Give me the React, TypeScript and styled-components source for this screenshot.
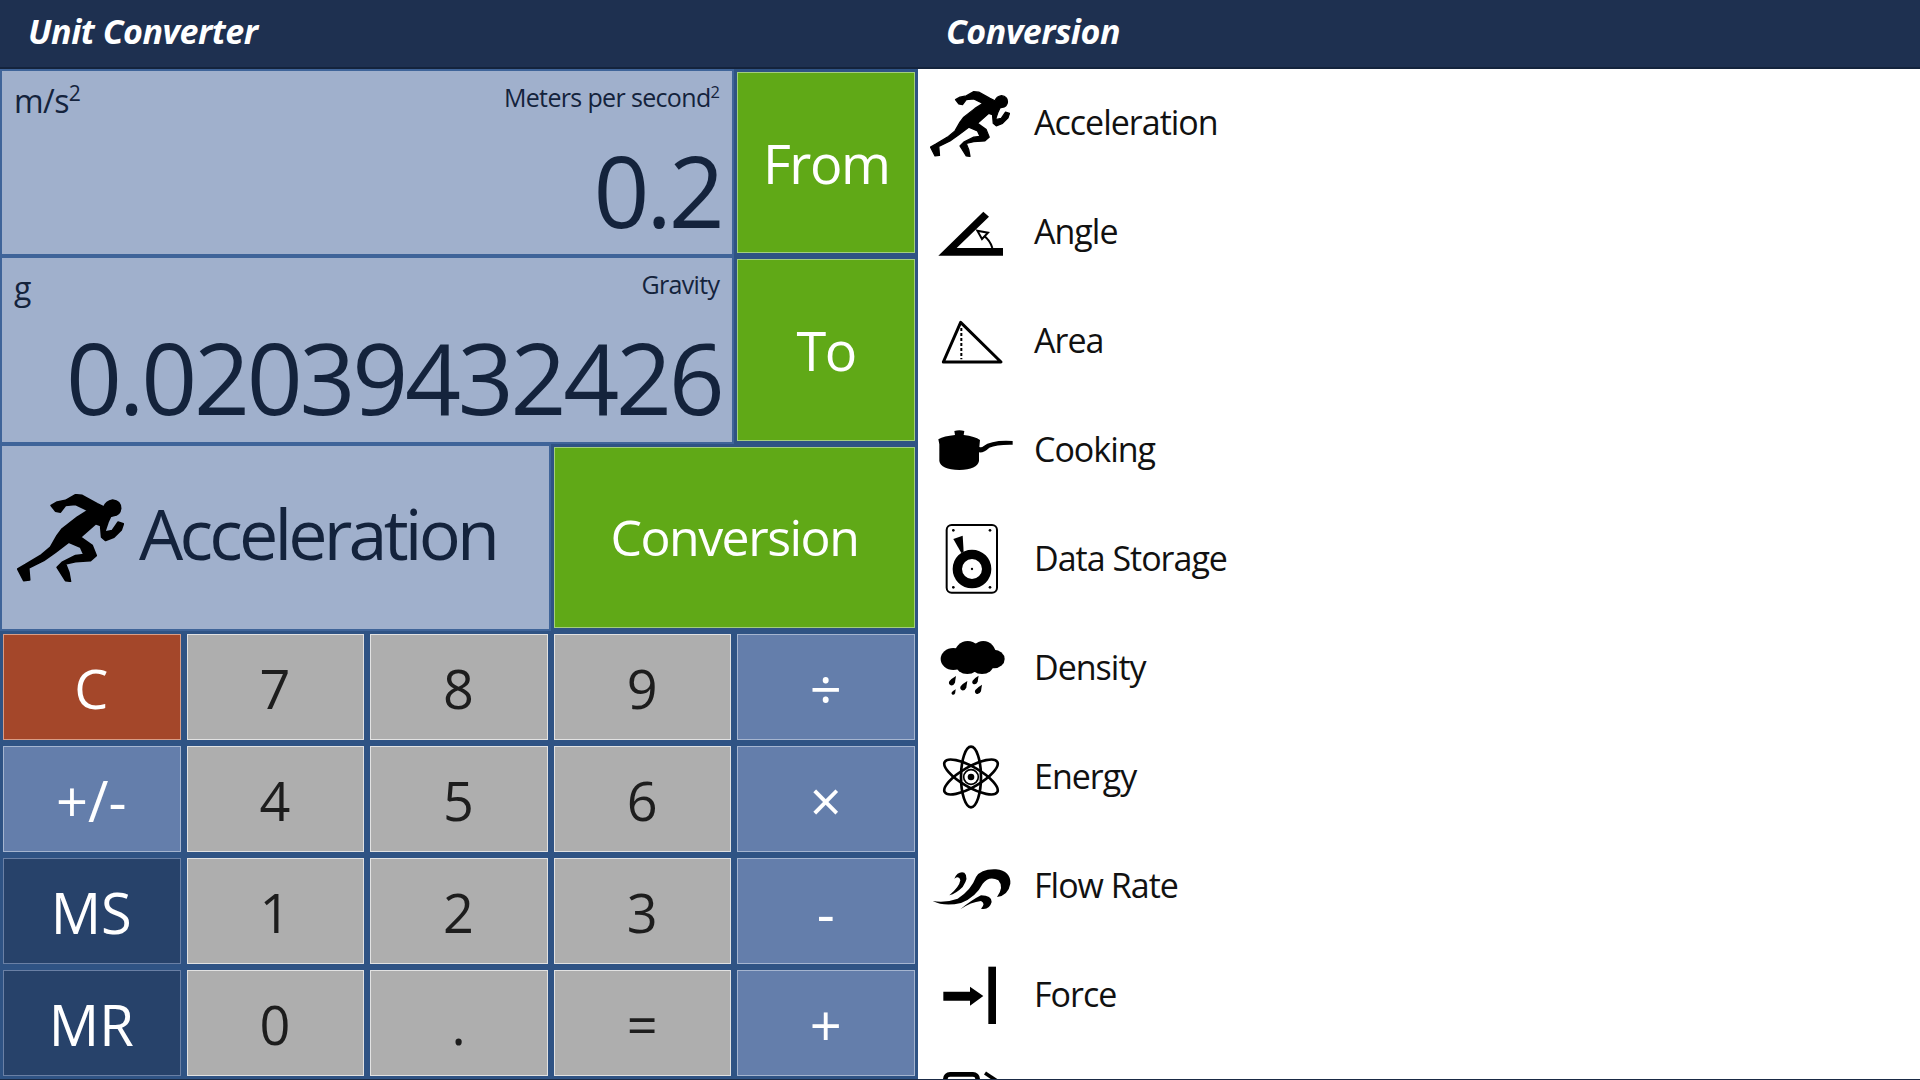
import React from 'react';
import styled, { createGlobalStyle } from 'styled-components';

const GlobalStyle = createGlobalStyle`
  html, body {
    margin: 0;
    height: 100%;
    overflow: hidden;
    background: #fff;
  }
`;

const FONT = '"Open Sans", "Noto Sans", sans-serif';
const INK = '#14233c';

const RUNNER =
  'M152 75 L170 65 L195 60 L225 43 L245 45 L290 70 L310 80 Q316 62 336 59 Q360 62 360 84 Q358 104 338 106 L330 108 L322 125 L312 155 L335 150 L352 125 L368 130 L362 148 L340 170 L315 180 L303 170 L300 135 L285 130 L240 170 L275 195 L287 225 L270 240 L225 243 L195 250 L205 275 L210 302 L195 300 L170 260 L185 245 L225 225 L250 222 L240 200 L205 185 L165 215 L130 240 L85 262 L88 298 L70 300 L52 265 L75 252 L120 225 L150 200 L170 165 L185 145 L230 110 L262 90 L225 72 L195 75 L180 95 L165 92 Z';

const Runner: React.FC<{ width: number; height: number }> = ({ width, height }) => (
  <svg width={width} height={height} viewBox="50 41 320 263">
    <path d={RUNNER} fill="#000" stroke="#000" strokeWidth="5" strokeLinejoin="round" />
  </svg>
);

const AngleIcon = () => (
  <svg width="90" height="90" viewBox="15 349 270 270">
    <path d="M55 555 L190 423 L207 438 L110 532 H249 V555 Z" fill="#000" />
    <path d="M217 532 Q210 508 190 494" fill="none" stroke="#000" strokeWidth="6" />
    <path d="M172 480 L204 486 L186 505 Z" fill="#fff" stroke="#000" strokeWidth="6" />
  </svg>
);

const AreaIcon = () => (
  <svg width="90" height="90" viewBox="15 676 270 270">
    <path d="M122 755 L243 874 H70 Z" fill="none" stroke="#000" strokeWidth="9" strokeLinejoin="round" />
    <path d="M124 772 V866" stroke="#000" strokeWidth="6" strokeDasharray="9 6" />
  </svg>
);

const CookingIcon = () => (
  <svg width="90" height="90" viewBox="15 22 270 270">
    <path d="M103 100 Q118 96 133 100 L131 112 Q165 116 180 127 L178 148 Q186 150 190 146 Q215 126 278 130 V141 Q230 140 208 150 Q192 166 177 164 V190 Q172 215 118 217 Q62 215 58 190 V140 L55 125 Q72 115 105 112 Z" fill="#000" />
  </svg>
);

const StorageIcon = () => (
  <svg width="90" height="90" viewBox="15 345 270 270">
    <rect x="80" y="378" width="151" height="203" rx="15" fill="none" stroke="#000" strokeWidth="6" />
    <circle cx="100" cy="394" r="4" fill="#000" />
    <circle cx="210" cy="394" r="4" fill="#000" />
    <circle cx="100" cy="565" r="4" fill="#000" />
    <circle cx="210" cy="565" r="4" fill="#000" />
    <path d="M100 420 L128 410 L131 460 L124 462 Z" fill="#000" />
    <circle cx="156" cy="510" r="44" fill="none" stroke="#000" strokeWidth="28" />
    <circle cx="156" cy="510" r="3.5" fill="#000" />
  </svg>
);

const Drop: React.FC<{ x: number; y: number; s?: number }> = ({ x, y, s = 1 }) => (
  <path
    transform={`translate(${x} ${y}) scale(${s})`}
    d="M12 -16 Q10 -4 9 4 Q4 14 -4 12 Q-12 8 -8 0 Q-2 -8 12 -16 Z"
    fill="#000"
  />
);

const DensityIcon = () => (
  <svg width="90" height="90" viewBox="15 678 270 270">
    <ellipse cx="100" cy="786" rx="38" ry="33" />
    <ellipse cx="143" cy="774" rx="40" ry="42" />
    <ellipse cx="190" cy="774" rx="38" ry="42" />
    <ellipse cx="222" cy="786" rx="32" ry="28" />
    <ellipse cx="142" cy="805" rx="34" ry="26" />
    <ellipse cx="186" cy="805" rx="34" ry="26" />
    <Drop x={96} y={853} />
    <Drop x={130} y={868} />
    <Drop x={165} y={851} s={0.9} />
    <Drop x={174} y={879} />
    <Drop x={100} y={886} s={0.6} />
  </svg>
);

const EnergyIcon = () => (
  <svg width="90" height="90" viewBox="17 11 270 270">
    <g fill="none" stroke="#000" strokeWidth="8">
      <ellipse cx="155" cy="146" rx="30" ry="91" />
      <ellipse cx="155" cy="146" rx="30" ry="91" transform="rotate(60 155 146)" />
      <ellipse cx="155" cy="146" rx="30" ry="91" transform="rotate(-60 155 146)" />
      <circle cx="155" cy="146" r="22" strokeWidth="5" />
    </g>
    <circle cx="155" cy="146" r="10" fill="#000" />
  </svg>
);

const FlowIcon = () => (
  <svg width="90" height="90" viewBox="12 342 270 270">
    <path d="M35 522 Q75 528 110 515 Q150 490 165 450 Q180 425 225 427 Q270 432 268 470 Q262 505 228 510 Q250 480 232 460 Q205 445 185 470 Q165 510 120 528 Q70 540 35 522 Z" />
    <path d="M85 505 Q115 480 118 460 Q115 445 100 455 Q110 432 130 437 Q145 450 125 480 Q105 500 85 505 Z" />
    <path d="M118 547 Q150 520 180 505 Q212 505 212 525 Q205 550 180 545 Q195 530 180 522 Q150 525 118 547 Z" />
  </svg>
);

const ForceIcon = () => (
  <svg width="90" height="90" viewBox="15 660 270 270">
    <path d="M205 710 H228 V882 H205 Z" />
    <path d="M70 785 H150 V770 L190 798 L150 827 V812 H70 Z" />
  </svg>
);

const FuelIcon = () => (
  <svg width="90" height="90" viewBox="15 984 270 270">
    <rect x="76" y="1030" width="97" height="120" rx="14" fill="none" stroke="#000" strokeWidth="14" />
    <path d="M195 1026 L240 1056" stroke="#000" strokeWidth="11" fill="none" />
  </svg>
);

const Screen = styled.div`
  display: flex;
  flex-direction: column;
  width: 1920px;
  height: 1080px;
  overflow: hidden;
  font-family: ${FONT};
  background: #fff;
`;

const TitleBar = styled.header`
  display: flex;
  align-items: center;
  flex: 0 0 69px;
  box-sizing: border-box;
  background: #1e3050;
  border-bottom: 2px solid #14233c;
`;

const Title = styled.h1<{ $width: number; $inset: number }>`
  margin: 0 0 5px;
  box-sizing: border-box;
  width: ${p => p.$width}px;
  padding-left: ${p => p.$inset}px;
  color: #fff;
  font-size: 34px;
  font-weight: 700;
  font-style: italic;
  letter-spacing: -0.45px;
`;

const Body = styled.div`
  display: flex;
  flex: 1;
  min-height: 0;
  border-bottom: 1px solid #1a2a45;
`;

const Pad = styled.section`
  flex: 0 0 918px;
  display: grid;
  grid-template-columns: repeat(5, 183.6px);
  grid-template-rows: repeat(3, 187.33px) repeat(4, 1fr);
  background: #2f5384;
`;

const Readout = styled.div`
  grid-column: span 4;
  position: relative;
  display: flex;
  flex-direction: column;
  justify-content: space-between;
  box-sizing: border-box;
  padding: 8px 11px 10px 12px;
  background: #a0b0cc;
  border: 2px solid #3f6499;
  color: ${INK};
`;

const ReadoutHead = styled.div`
  display: flex;
  justify-content: space-between;
  align-items: flex-start;
  margin-right: 2px;
`;

const Unit = styled.span`
  font-size: 32px;
  line-height: 44px;
  letter-spacing: -0.6px;
`;

const UnitName = styled.span`
  font-size: 25px;
  line-height: 36px;
  letter-spacing: -0.65px;
`;

const Sup = styled.sup`
  font-size: 66%;
  line-height: 0;
`;

const Value = styled.div<{ $size: number }>`
  text-align: right;
  font-size: ${p => p.$size}px;
  font-weight: 400;
  line-height: 1.1;
  letter-spacing: -3.3px;
  white-space: nowrap;
`;

const CategoryCard = styled.div`
  grid-column: span 3;
  display: flex;
  align-items: center;
  gap: 15px;
  box-sizing: border-box;
  padding: 0 0 8px 15px;
  background: #a0b0cc;
  border: 2px solid #3f6499;
  color: ${INK};
  font-size: 70px;
  font-weight: 400;
  letter-spacing: -3.8px;
`;

const RunnerSlot = styled.span<{ $drop: number }>`
  display: block;
  margin-top: ${p => p.$drop}px;
  svg {
    display: block;
  }
`;

const ModeButton = styled.button<{ $wide?: boolean }>`
  grid-column: span ${p => (p.$wide ? 2 : 1)};
  margin: 3px;
  padding: 0;
  background: #60a917;
  border: 1px solid #a4cf7d;
  color: #fff;
  font-family: ${FONT};
  font-size: ${p => (p.$wide ? 50 : 54)}px;
  font-weight: 400;
  letter-spacing: -1.5px;
`;

const KEY_COLORS = {
  digit: { bg: '#aeaeae', line: '#e2e2e2', ink: '#1d1d1d', size: 54 },
  op: { bg: '#647eab', line: '#a5b5d0', ink: '#fff', size: 56 },
  mem: { bg: '#27426a', line: '#6a80a5', ink: '#fff', size: 56 },
  clear: { bg: '#a4472a', line: '#d99c85', ink: '#fff', size: 54 },
};

type KeyKind = keyof typeof KEY_COLORS;

const Key = styled.button<{ $kind: KeyKind }>`
  margin: 3px;
  padding: 2px 1px 0 0;
  background: ${p => KEY_COLORS[p.$kind].bg};
  border: 1px solid ${p => KEY_COLORS[p.$kind].line};
  color: ${p => KEY_COLORS[p.$kind].ink};
  font-family: ${FONT};
  font-size: ${p => KEY_COLORS[p.$kind].size}px;
  font-weight: 400;
`;

const Catalog = styled.section`
  flex: 1;
  overflow: hidden;
  padding-left: 5px;
`;

const CatalogRow = styled.div`
  display: flex;
  align-items: center;
  height: 109px;
  gap: 18px;
  &:first-child {
    margin-top: -1px;
  }
`;

const IconSlot = styled.span`
  flex: 0 0 93px;
  display: flex;
  justify-content: center;
  align-items: center;
  height: 90px;
  svg {
    display: block;
    fill: #000;
  }
`;

const RowLabel = styled.span`
  margin-bottom: 2px;
  color: #111;
  font-size: 34px;
  letter-spacing: -1px;
`;

const KEYS: [string, KeyKind][] = [
  ['C', 'clear'], ['7', 'digit'], ['8', 'digit'], ['9', 'digit'], ['÷', 'op'],
  ['+/-', 'op'], ['4', 'digit'], ['5', 'digit'], ['6', 'digit'], ['×', 'op'],
  ['MS', 'mem'], ['1', 'digit'], ['2', 'digit'], ['3', 'digit'], ['-', 'op'],
  ['MR', 'mem'], ['0', 'digit'], ['.', 'digit'], ['=', 'digit'], ['+', 'op'],
];

const CATEGORIES: { label?: string; icon: React.ReactNode }[] = [
  { label: 'Acceleration', icon: <RunnerSlot $drop={3}><Runner width={80} height={66} /></RunnerSlot> },
  { label: 'Angle', icon: <AngleIcon /> },
  { label: 'Area', icon: <AreaIcon /> },
  { label: 'Cooking', icon: <CookingIcon /> },
  { label: 'Data Storage', icon: <StorageIcon /> },
  { label: 'Density', icon: <DensityIcon /> },
  { label: 'Energy', icon: <EnergyIcon /> },
  { label: 'Flow Rate', icon: <FlowIcon /> },
  { label: 'Force', icon: <ForceIcon /> },
  { icon: <FuelIcon /> },
];

const App: React.FC = () => {
  return (
    <Screen>
      <GlobalStyle />
      <TitleBar>
        <Title $width={918} $inset={28}>Unit Converter</Title>
        <Title $width={1002} $inset={28}>Conversion</Title>
      </TitleBar>
      <Body>
        <Pad>
          <Readout>
            <ReadoutHead>
              <Unit>m/s<Sup>2</Sup></Unit>
              <UnitName>Meters per second<Sup>2</Sup></UnitName>
            </ReadoutHead>
            <Value $size={98}>0.2</Value>
          </Readout>
          <ModeButton>From</ModeButton>
          <Readout>
            <ReadoutHead>
              <Unit>g</Unit>
              <UnitName>Gravity</UnitName>
            </ReadoutHead>
            <Value $size={98}>0.02039432426</Value>
          </Readout>
          <ModeButton>To</ModeButton>
          <CategoryCard>
            <RunnerSlot $drop={10}><Runner width={107} height={88} /></RunnerSlot>
            Acceleration
          </CategoryCard>
          <ModeButton $wide>Conversion</ModeButton>
          {KEYS.map(([label, kind]) => (
            <Key key={label} $kind={kind}>{label}</Key>
          ))}
        </Pad>
        <Catalog>
          {CATEGORIES.map(({ label, icon }, i) => (
            <CatalogRow key={i}>
              <IconSlot>{icon}</IconSlot>
              {label && <RowLabel>{label}</RowLabel>}
            </CatalogRow>
          ))}
        </Catalog>
      </Body>
    </Screen>
  );
};

export default App;
